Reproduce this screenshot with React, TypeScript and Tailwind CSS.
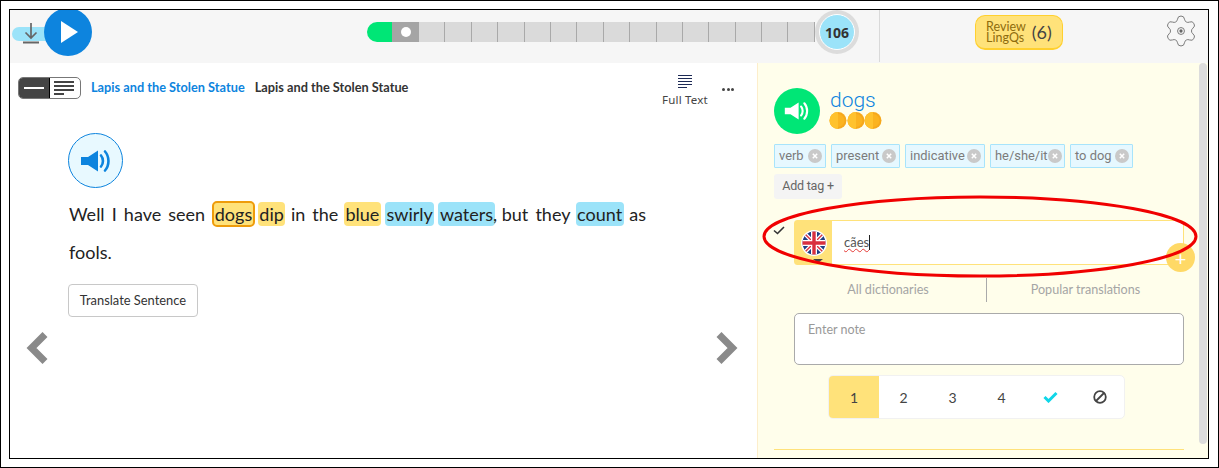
import React from "react";

const lato = { fontFamily: '"Lato", "Liberation Sans", sans-serif' };
const roboto = { fontFamily: '"Roboto", "Liberation Sans", sans-serif' };

function Speaker({ color, size, className }: { color: string; size: number; className?: string }) {
  return (
    <svg width={size} height={size} viewBox="0 0 32 32" className={className}>
      <path d="M1 12h7L18 5.5v21L8 20H1z" fill={color} />
      <path d="M21 10.5c2.6 3 2.6 8 0 11" fill="none" stroke={color} strokeWidth="2.6" strokeLinecap="round" />
      <path d="M25 6.5c4.6 5.2 4.6 13.8 0 19" fill="none" stroke={color} strokeWidth="2.6" strokeLinecap="round" />
    </svg>
  );
}

function Coin() {
  return (
    <svg width="18" height="17" viewBox="0 0 18 17" className="shrink-0">
      <circle cx="9" cy="8.5" r="8.5" fill="#f6a81c" />
      <path d="M9 0a8.5 8.5 0 0 0 0 17z" fill="#ffc22e" />
      <path d="M9 2a6.5 6.5 0 0 1 0 13z" fill="#fbb320" />
    </svg>
  );
}

function Tag({ label, w }: { label: string; w: string }) {
  return (
    <div className={`${w} h-[24px] border border-[#a8e4fb] bg-[#e6f8ff] flex items-center justify-between pl-[4px] pr-[3px] text-[12.9px] text-[#7b7b7b] rounded-[1px] whitespace-nowrap`}>
      <span>{label}</span>
      <span className="w-[14px] h-[14px] rounded-full bg-[#c9c9c9] flex items-center justify-center shrink-0">
        <svg width="6" height="6" viewBox="0 0 6 6"><path d="M.8.8l4.4 4.4M5.2.8L.8 5.2" stroke="#fff" strokeWidth="1.5" /></svg>
      </span>
    </div>
  );
}

function Word({ children, blue, active }: { children: React.ReactNode; blue?: boolean; active?: boolean }) {
  const c = active
    ? "bg-[#ffe27a] outline outline-2 -outline-offset-1 outline-[#ee9c0b] ml-[1px] -mr-[1.5px]"
    : blue
    ? "bg-[#9be3f9] -mx-[1.5px]"
    : "bg-[#ffe27a] -mx-[1.5px]";
  return <span className={`${c} rounded-[4px] px-[1.5px] py-[1px]`}>{children}</span>;
}

function Chevron({ right }: { right?: boolean }) {
  return (
    <svg width="24" height="34" viewBox="0 0 24 34">
      <path d={right ? "M4 3.5L17.5 17 4 30.5" : "M20 3.5L6.5 17 20 30.5"} fill="none" stroke="#8a8a8a" strokeWidth="7" strokeLinejoin="miter" />
    </svg>
  );
}

function Flag() {
  return (
    <svg width="26" height="26" viewBox="0 0 26 26">
      <defs>
        <clipPath id="flagc"><circle cx="13" cy="13" r="11.5" /></clipPath>
      </defs>
      <circle cx="13" cy="13" r="13" fill="#fff" />
      <g clipPath="url(#flagc)">
        <rect width="26" height="26" fill="#1f3f85" />
        <path d="M0 0l26 26M26 0L0 26" stroke="#fff" strokeWidth="4" />
        <path d="M0 0l26 26M26 0L0 26" stroke="#d9303f" strokeWidth="1.4" />
        <path d="M13 0v26M0 13h26" stroke="#fff" strokeWidth="6" />
        <path d="M13 0v26M0 13h26" stroke="#d9303f" strokeWidth="3.4" />
      </g>
    </svg>
  );
}

export default function App() {
  return (
    <div className="w-[1219px] h-[468px] border border-black bg-white pt-[8px] pl-[8px] overflow-hidden" style={lato}>
      <div className="w-[1200px] h-[450px] border border-black overflow-hidden flex flex-col">
        {/* header */}
        <div className="h-[53px] shrink-0 bg-[#f6f6f6] flex items-start">
          <div className="w-[357px] shrink-0 flex items-start pl-[2px]">
            <div className="w-[36px] h-[14px] mt-[17px] rounded-l-full bg-[#9be3f9] flex justify-center shrink-0">
              <svg width="18" height="21" viewBox="0 0 18 21" className="shrink-0 -mt-[4px] ml-[2px]">
                <path d="M9 0v15M3.5 9.5L9 15l5.5-5.5" fill="none" stroke="#666" strokeWidth="1.7" />
                <path d="M1 19.5h16" stroke="#666" strokeWidth="2" />
              </svg>
            </div>
            <div className="w-[48px] h-[48px] -mt-[2px] -ml-[4px] rounded-full bg-[#0d84de] flex items-center justify-center shrink-0">
              <svg width="17" height="22" viewBox="0 0 17 22" className="ml-[3px]"><path d="M0 0l17 11L0 22z" fill="#fff" /></svg>
            </div>
          </div>
          <div className="w-[513px] shrink-0 h-[52px] border-r border-[#d9d9d9] flex items-start">
            <div className="flex items-center mt-[12px] h-[20px]">
              <div className="w-[25px] h-[20px] bg-[#00e676] rounded-l-full" />
              <div className="w-[27px] h-[20px] bg-[#a5a5a5] flex items-center justify-center">
                <div className="w-[10px] h-[10px] rounded-full bg-white" />
              </div>
              <div className="w-[396px] h-[20px] flex bg-[#dadada]">
                {Array.from({ length: 15 }).map((_, i) => (
                  <div key={i} className="w-[26.4px] h-[20px] border-r border-[#a9a9a9]" />
                ))}
              </div>
            </div>
            <div className="w-[44px] h-[44px] rounded-full bg-[#dcdcdc] flex items-center justify-center shrink-0 text-[14px] font-bold text-[#333]">
              <div className="w-[36px] h-[36px] rounded-full bg-[#9be3f9] border border-white flex items-center justify-center" style={{ fontFamily: '"Open Sans", sans-serif' }}>
                106
              </div>
            </div>
          </div>
          <div className="flex-1 flex items-start">
            <div className="ml-[95px] mt-[5px] w-[88px] h-[35px] rounded-[10px] bg-[#ffe27a] border border-[#ffd02f] border-b-2 flex items-center justify-center gap-[6px] shrink-0">
              <span className="text-[12.5px] leading-[11.5px] text-[#8e6b0d]">
                Review
                <br />
                LingQs
              </span>
              <span className="text-[18px] text-[#444]">(6)</span>
            </div>
            <svg width="36" height="36" viewBox="0 0 24 24" className="ml-[100px] mt-[3px] shrink-0" fill="none" stroke="#777" strokeWidth="0.65">
              <path d="M9.671 4.136a2.34 2.34 0 0 1 4.659 0 2.34 2.34 0 0 0 3.319 1.915 2.34 2.34 0 0 1 2.33 4.033 2.34 2.34 0 0 0 0 3.831 2.34 2.34 0 0 1-2.33 4.033 2.34 2.34 0 0 0-3.319 1.915 2.34 2.34 0 0 1-4.659 0 2.34 2.34 0 0 0-3.32-1.915 2.34 2.34 0 0 1-2.33-4.033 2.34 2.34 0 0 0 0-3.831A2.34 2.34 0 0 1 6.35 6.051a2.34 2.34 0 0 0 3.319-1.915" />
              <circle cx="12" cy="12" r="2.3" />
              <circle cx="12" cy="12" r="1.1" fill="#666" stroke="none" />
            </svg>
          </div>
        </div>

        {/* body */}
        <div className="flex-1 flex min-h-0">
          {/* reader */}
          <div className="w-[747px] shrink-0 relative">
            <div className="flex items-start pl-[8px] pt-[14px] h-[70px]">
              <div className="w-[63px] h-[22px] rounded-[5px] border border-[#777] flex overflow-hidden shrink-0">
                <div className="w-[31px] bg-[#444] border-r border-black flex items-center justify-center">
                  <div className="w-[20px] h-[2px] bg-white" />
                </div>
                <div className="flex-1 flex flex-col justify-center gap-[2px] pl-[4px]">
                  <div className="w-[20px] h-[2px] bg-[#444]" />
                  <div className="w-[20px] h-[2px] bg-[#444]" />
                  <div className="w-[20px] h-[2px] bg-[#444]" />
                  <div className="w-[10px] h-[2px] bg-[#444]" />
                </div>
              </div>
              <span className="ml-[10px] text-[12.75px] leading-[21px] font-bold text-[#0d84de] whitespace-nowrap">Lapis and the Stolen Statue</span>
              <span className="ml-[10px] text-[12.75px] leading-[21px] font-bold text-[#333] whitespace-nowrap">Lapis and the Stolen Statue</span>
              <div className="ml-auto flex flex-col items-center w-[60px] -mt-[4px] mr-[42px]">
                <svg width="16" height="16" viewBox="0 0 16 16" className="mt-[1px]">
                  <path d="M1 1.5h14M1 4.5h14M1 7.5h14M1 10.5h14M1 13.5h9" stroke="#1d2a55" strokeWidth="1" />
                </svg>
                <span className="mt-[2px] text-[11.5px] leading-[16px] tracking-[0.2px] text-[#444] whitespace-nowrap" style={{ fontFamily: '"Noto Sans", sans-serif' }}>Full Text</span>
              </div>
              <div className="absolute left-[712px] top-[25px] flex gap-[1.5px]">
                <div className="w-[3px] h-[3px] rounded-full bg-[#444]" />
                <div className="w-[3px] h-[3px] rounded-full bg-[#444]" />
                <div className="w-[3px] h-[3px] rounded-full bg-[#444]" />
              </div>
            </div>
            <div className="ml-[58px] w-[578px]">
              <div className="w-[55px] h-[55px] rounded-full border border-[#0d84de] bg-[#e8f9ff] flex items-center justify-center">
                <Speaker color="#0d84de" size={32} />
              </div>
              <p className="mt-[7px] pl-[1px] text-[18px] leading-[38px] text-[#222] text-justify">
                Well I have seen <Word active>dogs</Word> <Word>dip</Word> in the <Word>blue</Word> <Word blue>swirly</Word> <Word blue>waters</Word>, <span className="-ml-[2.5px]">but</span> they <Word blue>count</Word> as fools.
              </p>
              <button className="mt-[13px] w-[130px] h-[33px] border border-[#c8c8c8] rounded-[4px] bg-white text-[12.9px] text-[#333]">Translate Sentence</button>
            </div>
            <div className="absolute left-[15px] top-[268px]"><Chevron /></div>
            <div className="absolute left-[705px] top-[268px]"><Chevron right /></div>
          </div>

          {/* panel */}
          <div className="flex-1 relative bg-[#fffeeb] border-l border-[#fdeecb] pl-[16px] pr-[24px]">
            <div className="absolute right-[1px] top-0 w-[8px] h-[381px] rounded-[4px] bg-[#dcdcdc]" />
            <div className="flex mt-[25px] h-[46px]">
              <div className="w-[46px] h-[46px] rounded-full bg-[#00e676] flex items-center justify-center shrink-0">
                <Speaker color="#fff" size={26} />
              </div>
              <div className="ml-[9px]">
                <div className="text-[21px] leading-[24px] font-light text-[#0d84de] pl-[1px]" style={roboto}>dogs</div>
                <div className="flex mt-[0px] -space-x-[0.5px]"><Coin /><Coin /><Coin /></div>
              </div>
            </div>
            <div className="flex gap-[5px] mt-[10px]" style={roboto}>
              <Tag label="verb" w="w-[52px]" />
              <Tag label="present" w="w-[69px]" />
              <Tag label="indicative" w="w-[80px]" />
              <Tag label="he/she/it" w="w-[75px]" />
              <Tag label="to dog" w="w-[63px]" />
            </div>
            <div className="mt-[6px] w-[68px] h-[25px] rounded-[3px] bg-[#f4f4f4] flex items-center justify-center text-[12.5px] tracking-[-0.2px] text-[#666]" style={roboto}>Add tag +</div>

            <div className="relative mt-[21px] ml-[20px] w-[390px] h-[45px] flex border border-[#ffe27a] rounded-[3px] bg-white">
              <svg width="12" height="9" viewBox="0 0 12 9" className="absolute -left-[22px] top-[5px]">
                <path d="M1 4.5l3.5 3L11 1" fill="none" stroke="#333" strokeWidth="1.6" />
              </svg>
              <div className="relative w-[37px] shrink-0 bg-[#ffe27a] flex items-center justify-center">
                <Flag />
                <div className="absolute left-[18px] bottom-[1px] w-0 h-0 border-x-[5px] border-x-transparent border-t-[4px] border-t-[#444]" />
              </div>
              <div className="pl-[12px] flex items-center text-[13px] text-[#555] h-full">
                <span className="underline decoration-wavy decoration-[#e53935] decoration-1">cães</span>
                <span className="w-[1px] h-[15px] bg-[#222]" />
              </div>
              <div className="absolute -right-[12px] bottom-[-8px] w-[29px] h-[29px] rounded-full bg-[#ffd966] flex items-center justify-center text-white text-[20px] leading-none">+</div>
            </div>

            <div className="ml-[20px] w-[390px] h-[24px] mt-[13px] flex text-[12.6px] text-[#a5a5a5]">
              <div className="w-[193px] h-[24px] border-r border-[#aaa] flex items-center justify-center">
                <span className="mr-[4px]">All dictionaries</span>
              </div>
              <div className="flex-1 flex items-center justify-center">Popular translations</div>
            </div>

            <div className="mt-[11px] ml-[20px] w-[390px] h-[52px] border border-[#aaa] rounded-[5px] bg-white px-[13px] pt-[8px] text-[12.5px] leading-[16px] text-[#999]">Enter note</div>

            <div className="mt-[10px] ml-[54px] w-[297px] h-[44px] border border-[#f1f1f1] rounded-[5px] bg-white flex overflow-hidden text-[14px] text-[#444]">
              <div className="w-[50px] bg-[#ffe27a] flex items-center justify-center">1</div>
              <div className="w-[49px] flex items-center justify-center">2</div>
              <div className="w-[49px] flex items-center justify-center">3</div>
              <div className="w-[49px] flex items-center justify-center">4</div>
              <div className="w-[49px] flex items-center justify-center">
                <svg width="15" height="12" viewBox="0 0 15 12"><path d="M1.5 6l4 4L13.5 2" fill="none" stroke="#0fd6e8" strokeWidth="3" /></svg>
              </div>
              <div className="w-[49px] flex items-center justify-center">
                <svg width="14" height="14" viewBox="0 0 14 14"><circle cx="7" cy="7" r="5.8" fill="none" stroke="#444" strokeWidth="1.8" /><path d="M3 11l8-8" stroke="#444" strokeWidth="1.8" /></svg>
              </div>
            </div>

            <div className="mt-[30px] w-[410px] h-[1px] bg-[#ffe27a]" />

            <svg width="437" height="85" viewBox="0 0 437 85" className="absolute left-[4px] top-[131px] pointer-events-none">
              <ellipse cx="218" cy="42.5" rx="216" ry="39.5" fill="none" stroke="#f00000" strokeWidth="3" />
            </svg>
          </div>
        </div>
      </div>
    </div>
  );
}
